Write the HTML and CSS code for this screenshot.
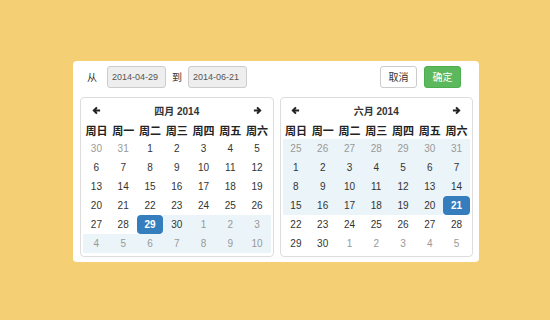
FILE: index.html
```html
<!DOCTYPE html>
<html lang="zh-CN">
<head>
  <meta charset="UTF-8">
  <title>日期范围选择</title>
  <link rel="stylesheet" href="styles.css">
</head>
<body>
  <div class="picker">
    <div class="barra">
      <span class="etiqueta">从</span>
      <span class="campo">2014-04-29</span>
      <span class="etiqueta corta">到</span>
      <span class="campo">2014-06-21</span>
      <span class="botones">
        <button class="btn">取消</button>
        <button class="btn verde">确定</button>
      </span>
    </div>
    <div class="calendarios">
      <div class="cal">
        <div class="rejilla">
          <span class="flecha"><svg width="9" height="9" viewBox="0 0 10 10"><path d="M9 5H2.5M5.5 1.5L2 5l3.5 3.5" fill="none" stroke="#222" stroke-width="2.2"/></svg></span>
          <span class="mes">四月 2014</span>
          <span class="flecha"><svg width="9" height="9" viewBox="0 0 10 10"><path d="M1 5h6.5M4.5 1.5L8 5 4.5 8.5" fill="none" stroke="#222" stroke-width="2.2"/></svg></span>
          <span class="dia-sem">周日</span><span class="dia-sem">周一</span><span class="dia-sem">周二</span><span class="dia-sem">周三</span><span class="dia-sem">周四</span><span class="dia-sem">周五</span><span class="dia-sem">周六</span>
          <span class="off">30</span><span class="off">31</span><span>1</span><span>2</span><span>3</span><span>4</span><span>5</span>
          <span>6</span><span>7</span><span>8</span><span>9</span><span>10</span><span>11</span><span>12</span>
          <span>13</span><span>14</span><span>15</span><span>16</span><span>17</span><span>18</span><span>19</span>
          <span>20</span><span>21</span><span>22</span><span>23</span><span>24</span><span>25</span><span>26</span>
          <span>27</span><span>28</span><span class="activo">29</span><span class="rango">30</span><span class="rango off">1</span><span class="rango off">2</span><span class="rango off">3</span>
          <span class="rango off">4</span><span class="rango off">5</span><span class="rango off">6</span><span class="rango off">7</span><span class="rango off">8</span><span class="rango off">9</span><span class="rango off">10</span>
        </div>
      </div>
      <div class="cal">
        <div class="rejilla">
          <span class="flecha"><svg width="9" height="9" viewBox="0 0 10 10"><path d="M9 5H2.5M5.5 1.5L2 5l3.5 3.5" fill="none" stroke="#222" stroke-width="2.2"/></svg></span>
          <span class="mes">六月 2014</span>
          <span class="flecha"><svg width="9" height="9" viewBox="0 0 10 10"><path d="M1 5h6.5M4.5 1.5L8 5 4.5 8.5" fill="none" stroke="#222" stroke-width="2.2"/></svg></span>
          <span class="dia-sem">周日</span><span class="dia-sem">周一</span><span class="dia-sem">周二</span><span class="dia-sem">周三</span><span class="dia-sem">周四</span><span class="dia-sem">周五</span><span class="dia-sem">周六</span>
          <span class="rango off">25</span><span class="rango off">26</span><span class="rango off">27</span><span class="rango off">28</span><span class="rango off">29</span><span class="rango off">30</span><span class="rango off">31</span>
          <span class="rango">1</span><span class="rango">2</span><span class="rango">3</span><span class="rango">4</span><span class="rango">5</span><span class="rango">6</span><span class="rango">7</span>
          <span class="rango">8</span><span class="rango">9</span><span class="rango">10</span><span class="rango">11</span><span class="rango">12</span><span class="rango">13</span><span class="rango">14</span>
          <span class="rango">15</span><span class="rango">16</span><span class="rango">17</span><span class="rango">18</span><span class="rango">19</span><span class="rango">20</span><span class="activo">21</span>
          <span>22</span><span>23</span><span>24</span><span>25</span><span>26</span><span>27</span><span>28</span>
          <span>29</span><span>30</span><span class="off">1</span><span class="off">2</span><span class="off">3</span><span class="off">4</span><span class="off">5</span>
        </div>
      </div>
    </div>
  </div>
</body>
</html>
```

FILE: styles.css
```css
html, body {
  margin: 0;
  height: 100%;
}
body {
  background-color: #f5cf74;
  font-family: "Liberation Sans", "Noto Sans CJK SC", sans-serif;
  color: #333;
  padding: 61px 0 0 73px;
  box-sizing: border-box;
}
.picker {
  width: 406px;
  height: 201px;
  box-sizing: border-box;
  background-color: #fff;
  border-radius: 4px;
  padding: 4px 6px 6px 7px;
}
.barra {
  display: flex;
  align-items: center;
  height: 23px;
}
.etiqueta {
  font-size: 10px;
  margin: 0 10px 0 7px;
}
.etiqueta.corta {
  margin: 0 6px 0 6px;
}
.campo {
  width: 59px;
  height: 22px;
  box-sizing: border-box;
  background-color: #eee;
  border: 1px solid #ccc;
  border-radius: 3px;
  font-size: 9px;
  color: #555;
  line-height: 20px;
  padding-left: 4px;
}
.botones {
  margin-left: auto;
  margin-right: 12px;
  display: flex;
  gap: 7px;
}
.btn {
  width: 37px;
  height: 22px;
  box-sizing: border-box;
  padding: 0;
  font-family: "Liberation Sans", "Noto Sans CJK SC", sans-serif;
  font-size: 10px;
  color: #333;
  background-color: #fff;
  border: 1px solid #ccc;
  border-radius: 3px;
}
.btn.verde {
  background-color: #5cb85c;
  border-color: #4cae4c;
  color: #fff;
}
.calendarios {
  display: flex;
  gap: 6px;
  margin-top: 9px;
}
.cal {
  flex: 1;
  border: 1px solid #ddd;
  border-radius: 4px;
  padding: 3px 2px;
}
.rejilla {
  display: grid;
  grid-template-columns: repeat(7, 1fr);
  grid-auto-rows: 19px;
  font-size: 10px;
}
.rejilla span {
  display: flex;
  align-items: center;
  justify-content: center;
}
.mes {
  grid-column: span 5;
  font-weight: bold;
  font-size: 10px;
}
.dia-sem {
  font-weight: bold;
  font-size: 11px;
  color: #222;
}
.off {
  color: #999;
}
.rango {
  background-color: #ebf4f8;
}
.activo {
  background-color: #357ebd;
  color: #fff;
  font-weight: bold;
  border-radius: 4px;
}
```
